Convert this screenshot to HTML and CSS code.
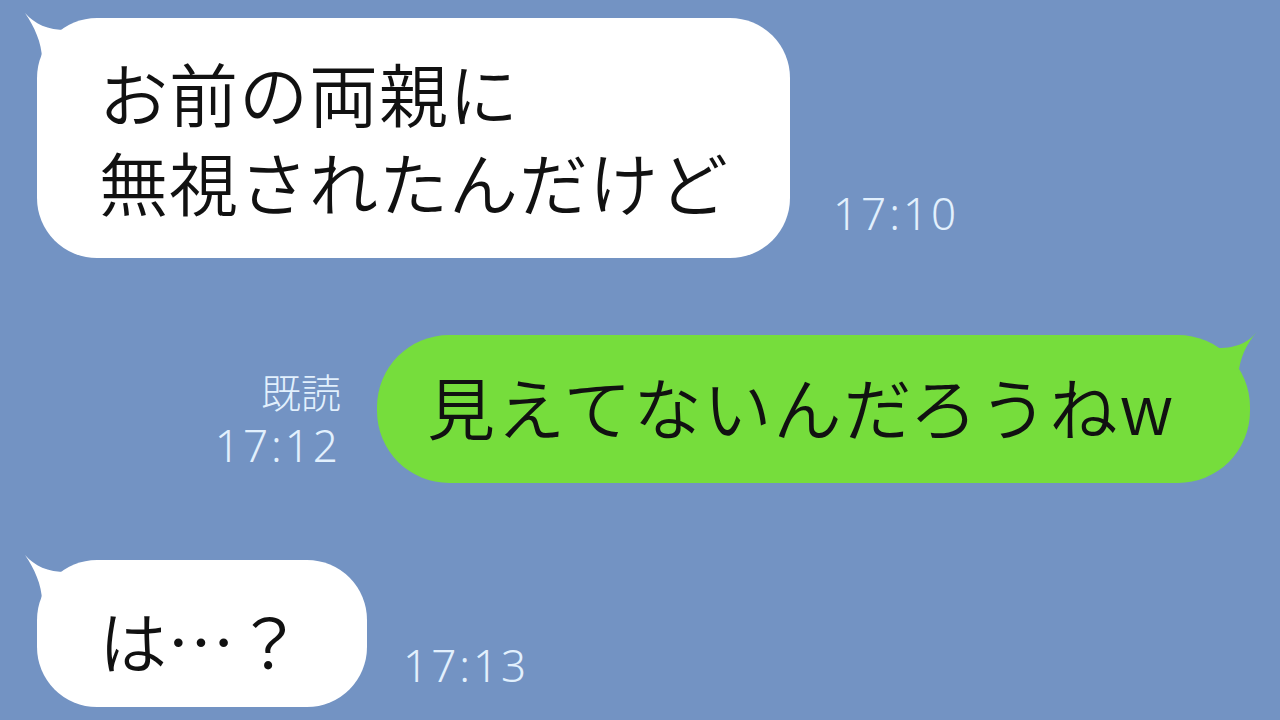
FILE: index.html
```html
<!DOCTYPE html>
<html lang="ja">
<head>
<meta charset="utf-8">
<title>Chat</title>
<link rel="stylesheet" href="styles.css">
</head>
<body>
<div class="chat">
  <div class="row row-in">
    <div class="bubble bubble-white bubble-1">
      <svg class="tail tail-left" viewBox="0 0 50 50" width="50" height="50"><path d="M2,2 C12,13 24,19 44,19 L44,48 L19,48 C19,32 11,15 2,2 Z" fill="#ffffff"/></svg>
      <div class="msg-lines">
        <p class="msg">お前の両親に</p>
        <p class="msg">無視されたんだけど</p>
      </div>
    </div>
    <span class="time time-1">17:10</span>
  </div>

  <div class="row row-out">
    <div class="meta">
      <span class="read">既読</span>
      <span class="time">17:12</span>
    </div>
    <div class="bubble bubble-green">
      <svg class="tail tail-right" viewBox="0 0 50 50" width="50" height="50"><path d="M7,4 C16,14 26,20 46,20 L46,48 L26,48 C24,30 18,16 7,4 Z" fill="#76dd3c"/></svg>
      <p class="msg">見えてないんだろうねw</p>
    </div>
  </div>

  <div class="row row-in">
    <div class="bubble bubble-white bubble-3">
      <svg class="tail tail-left" viewBox="0 0 50 50" width="50" height="50"><path d="M2,2 C12,13 24,19 44,19 L44,48 L19,48 C19,32 11,15 2,2 Z" fill="#ffffff"/></svg>
      <p class="msg">は…？</p>
    </div>
    <span class="time time-3">17:13</span>
  </div>
</div>
</body>
</html>
```

FILE: styles.css
```css
html, body {
  margin: 0;
  padding: 0;
}
body {
  width: 1280px;
  height: 720px;
  overflow: hidden;
  background: #7393c3;
  font-family: "Noto Sans CJK JP", "Noto Sans", sans-serif;
}
.chat {
  display: flex;
  flex-direction: column;
  gap: 77px;
  padding: 18px 30px 0 37px;
}
.row {
  display: flex;
  align-items: flex-end;
}
.row-out {
  justify-content: flex-end;
}
.bubble {
  position: relative;
  box-sizing: border-box;
  display: flex;
  align-items: center;
}
.bubble-white {
  background: #ffffff;
  border-radius: 60px;
}
.bubble-green {
  background: #76dd3c;
  border-radius: 72px;
  width: 873px;
  height: 148px;
  padding: 0 0 6px 50px;
}
.bubble-1 {
  width: 753px;
  height: 240px;
  padding: 0 0 0 62px;
}
.bubble-3 {
  height: 147px;
  padding: 12px 64px 0 62px;
}
.msg-lines {
  display: flex;
  flex-direction: column;
  gap: 21px;
  margin-top: -4px;
}
.msg {
  margin: 0;
  font-size: 68px;
  font-weight: 350;
  line-height: 68px;
  color: #111111;
  white-space: nowrap;
}
.bubble-1 .msg {
  font-size: 69px;
  line-height: 68px;
  letter-spacing: 1px;
}
.bubble-green .msg {
  letter-spacing: 2px;
}
.tail {
  position: absolute;
  top: -7px;
}
.tail-left {
  left: -14px;
}
.tail-right {
  right: -14px;
  transform: scaleX(-1);
}
.time {
  font-family: "Noto Sans", "DejaVu Sans", sans-serif;
  font-weight: 300;
  font-size: 44px;
  line-height: 44px;
  letter-spacing: 3px;
  color: #e2f0fd;
}
.time-1 {
  margin: 0 0 23px 43px;
}
.time-3 {
  margin: 0 0 20px 36px;
}
.meta {
  display: flex;
  flex-direction: column;
  align-items: flex-end;
  gap: 14px;
  margin: 0 36px 16px 0;
}
.read {
  font-family: "Noto Sans CJK JP", sans-serif;
  font-weight: 300;
  font-size: 40px;
  line-height: 36px;
  color: #e2f0fd;
}
```
